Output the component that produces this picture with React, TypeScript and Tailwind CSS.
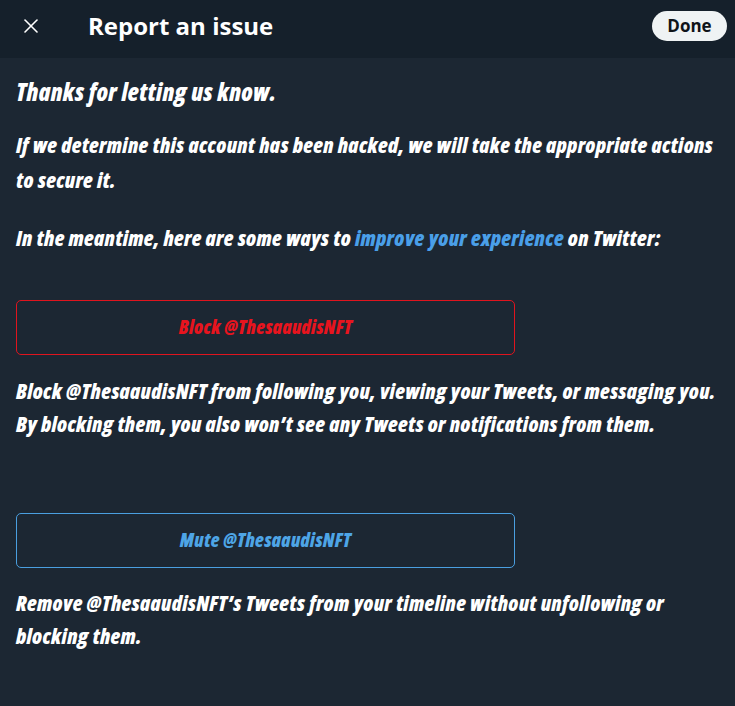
import { X } from "lucide-react";

const face = "font-['Open_Sans','Liberation_Sans',sans-serif] [font-stretch:75%]";

export default function App() {
  return (
    <div className={`h-[706px] w-[735px] overflow-hidden bg-[#1c2733] text-white ${face}`}>
      <header className="flex h-[58px] items-center bg-[#15202b] pb-[6px] pl-[19px] pr-[8px]">
        <X className="h-[24px] w-[24px] text-white" strokeWidth={1.6} />
        <h1 className="ml-[45px] text-[24px] font-bold leading-none [font-stretch:100%]">Report an issue</h1>
        <button className="ml-auto h-[30px] w-[75px] rounded-full bg-[#eff3f4] text-[17px] font-bold text-[#0f1419] [font-stretch:100%]">
          Done
        </button>
      </header>

      <main className="px-4 font-extrabold italic tracking-[0.3px]">
        <p className="mt-[19px] text-[24px] leading-[30px]">Thanks for letting us know.</p>
        <p className="mt-[21px] text-[21px] leading-[35px]">
          If we determine this account has been hacked, we will take the appropriate actions to secure it.
        </p>
        <p className="mt-[23px] text-[21px] leading-[35px]">
          In the meantime, here are some ways to <span className="text-[#4a9fe8]">improve your experience</span> on Twitter:
        </p>

        <button className="mt-[44px] flex h-[55px] w-[499px] items-center justify-center rounded-[5px] border border-[#e0141e] text-[19px] font-extrabold italic text-[#e8141e]">
          Block @ThesaaudisNFT
        </button>
        <p className="mt-[20px] text-[21px] leading-[33px]">
          Block @ThesaaudisNFT from following you, viewing your Tweets, or messaging you. By blocking them, you also won’t see any Tweets or notifications from them.
        </p>

        <button className="mt-[72px] flex h-[55px] w-[499px] items-center justify-center rounded-[5px] border border-[#4a9fe0] text-[19px] font-extrabold italic text-[#4ea5e6]">
          Mute @ThesaaudisNFT
        </button>
        <p className="mt-[19px] text-[21px] leading-[33px]">
          Remove @ThesaaudisNFT’s Tweets from your timeline without unfollowing or blocking them.
        </p>
      </main>
    </div>
  );
}
